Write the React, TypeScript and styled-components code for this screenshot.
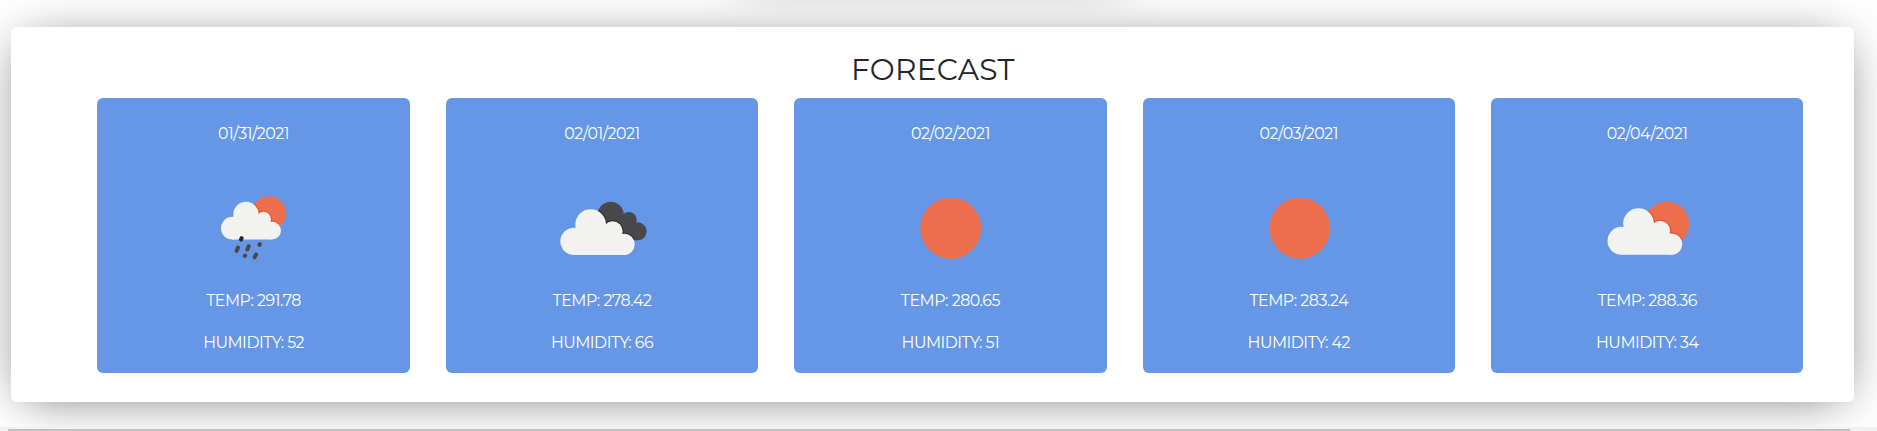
import React, { useId } from "react";
import styled, { createGlobalStyle } from "styled-components";

const GlobalStyle = createGlobalStyle`
  * { box-sizing: border-box; }
  html, body { margin: 0; background: #fff; overflow: hidden; }
  body { font-family: Montserrat, Inter, sans-serif; color: #212529; }
`;

const Page = styled.div`
  height: 431px;
  overflow: hidden;
  display: flex;
  flex-direction: column;
`;

const SearchPanel = styled.div`
  flex: none;
  width: 414px;
  height: 120px;
  margin: -140px 0 0 726px;
  border-radius: 6px;
  box-shadow: 0 5px 48px -12px rgba(0, 0, 0, 0.6);
`;

const Panel = styled.section`
  flex: none;
  display: flex;
  flex-direction: column;
  width: 1843px;
  height: 375px;
  margin: 47px 0 0 11px;
  padding: 22px 50.6px 0 86.4px;
  background: #fff;
  border-radius: 6px;
  box-shadow: 0 5px 48px -12px rgba(0, 0, 0, 0.6);
`;

const Title = styled.h3`
  margin: 0 0 8px -35px;
  height: 41px;
  font-size: 29.7px;
  font-weight: 450;
  line-height: 40px;
  letter-spacing: 0.3px;
  text-align: center;
`;

const Cards = styled.div`
  display: grid;
  grid-template-columns: repeat(5, 1fr);
  column-gap: 36px;
`;

const Card = styled.article`
  display: flex;
  flex-direction: column;
  align-items: center;
  height: 275px;
  padding-top: 24px;
  border-radius: 6px;
  background: #6597e6;
  color: #fff;
`;

const Line = styled.p<{ $gap?: number; $tracking?: number }>`
  margin: ${(p) => p.$gap ?? 0}px 0 0;
  font-size: 15.8px;
  font-weight: 450;
  line-height: 24px;
  letter-spacing: ${(p) => p.$tracking ?? 0}px;
  white-space: nowrap;
`;

const Icon = styled.svg`
  display: block;
  flex: none;
  width: 100px;
  height: 100px;
  margin-top: 32px;
`;

const Track = styled.div`
  flex: none;
  position: relative;
  height: 4px;
  margin-top: 25px;
  padding: 2px 27px 0 8px;
  background: #f1f1f1;
`;

const Thumb = styled.div`
  height: 2px;
  background: #c1c1c1;
`;

type Circle = [number, number, number];

const cloudPath = (circles: Circle[], bottom: number) => {
  const first = circles[0];
  const last = circles[circles.length - 1];
  return (
    <>
      {circles.map(([x, y, r]) => (
        <circle key={x} cx={x} cy={y} r={r} />
      ))}
      <path d={`M${first[0]} ${first[1]}L${circles[1][0]} ${circles[1][1]}L${circles[2][0]} ${circles[2][1]}L${last[0]} ${last[1]}V${bottom}H${first[0]}Z`} />
    </>
  );
};

const bigCloud: Circle[] = [[95, 182, 42], [146, 130, 46], [211, 152, 30], [245, 192, 32]];
const nightCloud: Circle[] = [[101, 183, 41], [151, 133, 46], [217, 153, 30], [251, 192, 32]];
const darkCloud: Circle[] = [[170, 146, 34], [211, 103, 39], [265, 119, 24], [292, 153, 27]];
const rainCloud: Circle[] = [[97, 144, 34], [138, 103, 38], [191, 117, 22], [216, 151, 27]];

type Kind = "rain" | "clouds" | "sun" | "partly";

function WeatherIcon({ kind }: { kind: Kind }) {
  const clip = useId();
  if (kind === "sun") {
    return (
      <Icon viewBox="0 0 100 100">
        <circle cx="50.8" cy="50.2" r="30.5" fill="#ec6e4c" />
      </Icon>
    );
  }
  if (kind === "clouds") {
    return (
      <Icon viewBox="35 -7 300 300">
        <clipPath id={clip}>{cloudPath(darkCloud, 180)}</clipPath>
        <g fill="#48484a">{cloudPath(darkCloud, 180)}</g>
        <g clipPath={`url(#${clip})`} fill="#2a2a2c" stroke="#2a2a2c" strokeWidth="6">{cloudPath(nightCloud, 224)}</g>
        <g fill="#f2f2f0">{cloudPath(nightCloud, 224)}</g>
      </Icon>
    );
  }
  const rain = kind === "rain";
  const [sx, sy, sr] = rain ? [207, 99, 51] : [231, 131, 67];
  const cloud = rain ? rainCloud : bigCloud;
  const bottom = rain ? 178 : 224;
  return (
    <Icon viewBox={rain ? "12 -6.5 300 300" : "21.5 -6.5 300 300"}>
      <clipPath id={clip}>
        <circle cx={sx} cy={sy} r={sr} />
      </clipPath>
      <circle cx={sx} cy={sy} r={sr} fill="#ec6e4c" />
      <g clipPath={`url(#${clip})`} fill="#ea4c28" stroke="#ea4c28" strokeWidth="6">{cloudPath(cloud, bottom)}</g>
      <g fill="#f2f2f0">{cloudPath(cloud, bottom)}</g>
      {rain && (
        <g stroke="#48484a" strokeWidth="12" strokeLinecap="round">
          <path stroke="#252527" d="M123 178L125 174" />
          <path d="M110 212L114 202M142 208L146 198M178.500 194L179.500 192M134.500 227L135.500 226M164 231L168 223" />
        </g>
      )}
    </Icon>
  );
}

const days: { date: string; kind: Kind; temp: string; humidity: number }[] = [
  { date: "01/31/2021", kind: "rain", temp: "291.78", humidity: 52 },
  { date: "02/01/2021", kind: "clouds", temp: "278.42", humidity: 66 },
  { date: "02/02/2021", kind: "sun", temp: "280.65", humidity: 51 },
  { date: "02/03/2021", kind: "sun", temp: "283.24", humidity: 42 },
  { date: "02/04/2021", kind: "partly", temp: "288.36", humidity: 34 },
];

export default function App() {
  return (
    <>
      <GlobalStyle />
      <Page>
        <SearchPanel />
        <Panel>
          <Title>FORECAST</Title>
          <Cards>
            {days.map((day) => (
              <Card key={day.date}>
                <Line $tracking={-0.45}>{day.date}</Line>
                <WeatherIcon kind={day.kind} />
                <Line $gap={11} $tracking={-0.45}>TEMP: {day.temp}</Line>
                <Line $gap={18} $tracking={-0.5}>HUMIDITY: {day.humidity}</Line>
              </Card>
            ))}
          </Cards>
        </Panel>
        <Track>
          <Thumb />
        </Track>
      </Page>
    </>
  );
}
